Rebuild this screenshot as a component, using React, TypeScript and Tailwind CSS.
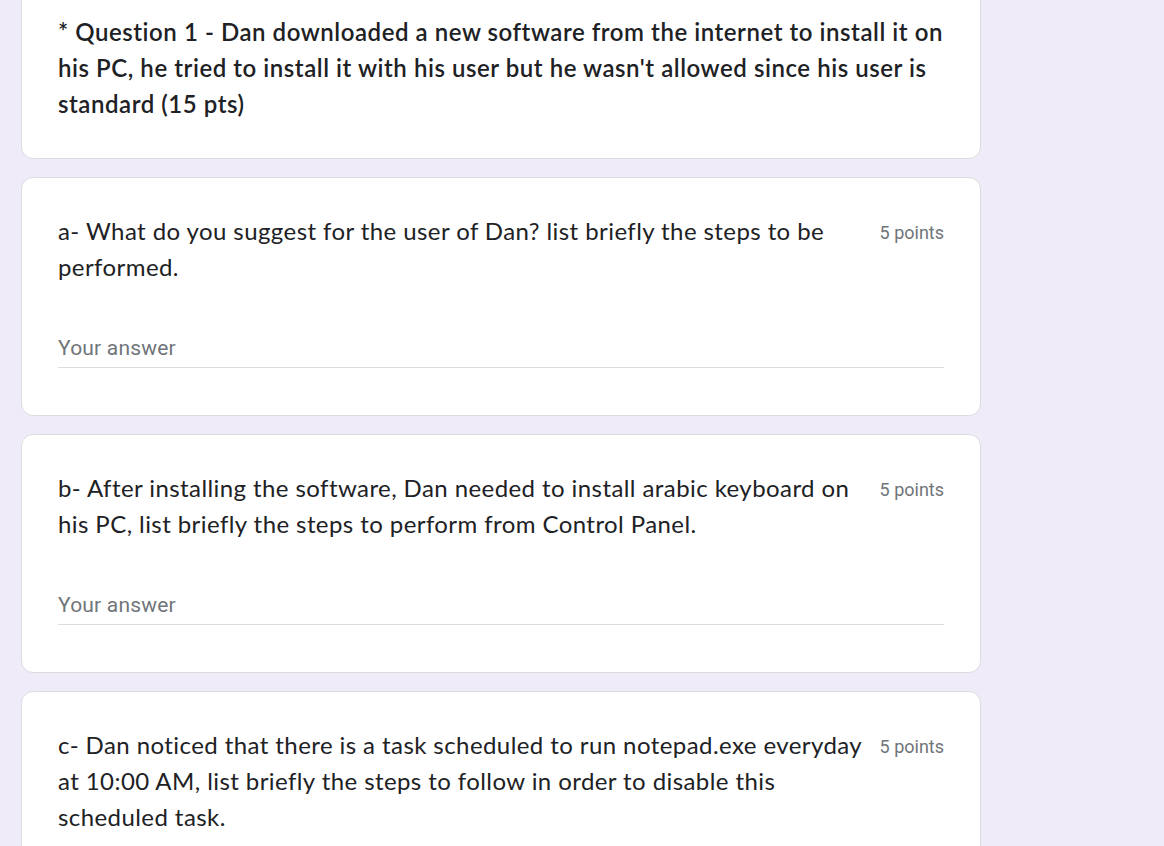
const titleFont = { fontFamily: 'Lato, "Open Sans", sans-serif' };

type Q = { lines: string[]; points: string; answer: boolean };

const questions: Q[] = [
  {
    lines: ['a- What do you suggest for the user of Dan? list briefly the steps to be', 'performed.'],
    points: '5 points',
    answer: true,
  },
  {
    lines: ['b- After installing the software, Dan needed to install arabic keyboard on', 'his PC, list briefly the steps to perform from Control Panel.'],
    points: '5 points',
    answer: true,
  },
  {
    lines: [
      'c- Dan noticed that there is a task scheduled to run notepad.exe everyday',
      'at 10:00 AM, list briefly the steps to follow in order to disable this',
      'scheduled task.',
    ],
    points: '5 points',
    answer: true,
  },
];

const QuestionCard = ({ q }: { q: Q }) => (
  <div className="bg-white border border-[#dadce0] rounded-[12px] pt-[36px] pb-[47px] px-[36px]">
    <div className="flex items-start gap-[12px]">
      <div className="flex-1 -mt-[1px] mb-[1px] text-[24px] leading-[36px] tracking-[0.42px] text-[#202124] whitespace-nowrap" style={titleFont}>
        {q.lines.map((l, i) => (
          <div key={i}>{l}</div>
        ))}
      </div>
      <div className="pt-[1px] text-[18px] leading-[36px] text-[#70757a] font-['Roboto',sans-serif] whitespace-nowrap">
        {q.points}
      </div>
    </div>
    {q.answer && (
      <div className="mt-[48px] h-[34px] border-b border-[#dadce0] text-[21px] leading-[28px] tracking-[0.2px] text-[#70757a] font-['Roboto',sans-serif]">
        Your answer
      </div>
    )}
  </div>
);

export default function App() {
  return (
    <div className="h-[846px] bg-[#f0ebf8] overflow-hidden">
      <div className="w-[960px] ml-[21px] -mt-[22px] flex flex-col gap-[18px]">
        <div className="bg-white border border-[#dadce0] rounded-[12px] pt-[35px] pb-[36px] px-[36px]">
          <div className="text-[24px] leading-[36px] tracking-[0.55px] text-[#202124] font-semibold whitespace-nowrap" style={titleFont}>
            <div>* Question 1 - Dan downloaded a new software from the internet to install it on</div>
            <div>his PC, he tried to install it with his user but he wasn't allowed since his user is</div>
            <div>standard (15 pts)</div>
          </div>
        </div>
        {questions.map((q, i) => (
          <QuestionCard key={i} q={q} />
        ))}
      </div>
    </div>
  );
}
